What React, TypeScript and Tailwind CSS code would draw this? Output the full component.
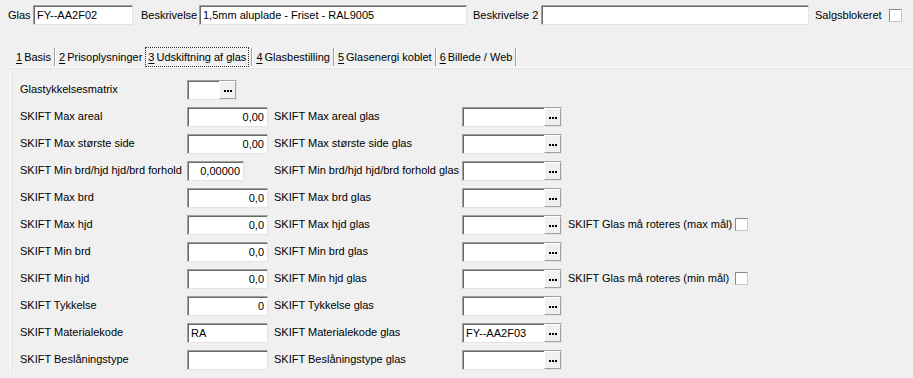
import React from 'react'

const font = { fontFamily: '"Liberation Sans", Arial, sans-serif' }

function Dots() {
  return (
    <span className="flex h-full w-[17px] shrink-0 items-center justify-center gap-[1px] border border-t-white border-l-white border-b-[#a0a0a0] border-r-[#a0a0a0] bg-[#f0f0f0] pt-[2px]">
      <i className="block h-[2px] w-[2px] bg-black" />
      <i className="block h-[2px] w-[2px] bg-black" />
      <i className="block h-[2px] w-[2px] bg-black" />
    </span>
  )
}

function Field({ w, value = '', right = false, button = false }: { w: string; value?: string; right?: boolean; button?: boolean }) {
  return (
    <div className={`flex h-[20px] ${w} items-stretch border border-t-[#a0a0a0] border-l-[#a0a0a0] border-b-[#e3e3e3] border-r-[#e3e3e3] bg-white shadow-[inset_1px_1px_0_#696969]`}>
      <span className={`flex flex-1 items-center overflow-hidden whitespace-nowrap px-[3px] pt-px leading-none ${right ? 'justify-end' : ''}`}>
        {value}
      </span>
      {button && <Dots />}
    </div>
  )
}

function Check() {
  return <span className="block h-[13px] w-[13px] shrink-0 border border-t-[#8a8a8a] border-l-[#8a8a8a] border-b-[#c8c8c8] border-r-[#c8c8c8] bg-white" />
}

const rows: { l1: string; v1?: string; n?: boolean; narrow?: boolean; l2?: string; v2?: string; l3?: string; dots1?: boolean }[] = [
  { l1: 'Glastykkelsesmatrix', dots1: true },
  { l1: 'SKIFT Max areal', v1: '0,00', n: true, l2: 'SKIFT Max areal glas' },
  { l1: 'SKIFT Max største side', v1: '0,00', n: true, l2: 'SKIFT Max største side glas' },
  { l1: 'SKIFT Min brd/hjd hjd/brd forhold', v1: '0,00000', n: true, narrow: true, l2: 'SKIFT Min brd/hjd hjd/brd forhold glas' },
  { l1: 'SKIFT Max brd', v1: '0,0', n: true, l2: 'SKIFT Max brd glas' },
  { l1: 'SKIFT Max hjd', v1: '0,0', n: true, l2: 'SKIFT Max hjd glas', l3: 'SKIFT Glas må roteres (max mål)' },
  { l1: 'SKIFT Min brd', v1: '0,0', n: true, l2: 'SKIFT Min brd glas' },
  { l1: 'SKIFT Min hjd', v1: '0,0', n: true, l2: 'SKIFT Min hjd glas', l3: 'SKIFT Glas må roteres (min mål)' },
  { l1: 'SKIFT Tykkelse', v1: '0', n: true, l2: 'SKIFT Tykkelse glas' },
  { l1: 'SKIFT Materialekode', v1: 'RA', l2: 'SKIFT Materialekode glas', v2: 'FY--AA2F03' },
  { l1: 'SKIFT Beslåningstype', v1: '', l2: 'SKIFT Beslåningstype glas' },
]

const tabs = ['Basis', 'Prisoplysninger', 'Udskiftning af glas', 'Glasbestilling', 'Glasenergi koblet', 'Billede / Web']

export default function App() {
  return (
    <div className="h-[378px] w-[913px] overflow-hidden bg-[#f0f0f0] text-[11px] text-black" style={font}>
      {/* Header fields */}
      <div className="flex h-[30px] items-center whitespace-nowrap pl-[8px]">
        <span className="w-[25px]">Glas</span>
        <Field w="w-[100px]" value="FY--AA2F02" />
        <span className="w-[66px] pl-[8px]">Beskrivelse</span>
        <Field w="w-[268px]" value="1,5mm aluplade - Friset - RAL9005" />
        <span className="w-[74px] pl-[6px]">Beskrivelse 2</span>
        <Field w="w-[268px]" />
        <span className="w-[80px] pl-[6px]">Salgsblokeret</span>
        <Check />
      </div>

      {/* Tabs */}
      <div className="mt-[17px] flex h-[20px] items-stretch whitespace-nowrap pl-[15px]">
        {tabs.map((t, i) => (
          <div key={t} className="flex items-stretch">
            <span className={`flex items-center ${i === 2 ? 'border border-dotted border-[#333] px-[2px]' : 'px-px'}`}>
              <span className="underline underline-offset-[2px]">{i + 1}</span>
              <span className="ml-[2px]">{t}</span>
            </span>
            {i !== 1 && <span className="mx-[2px] my-[1px] w-[2px] border-l border-l-[#a0a0a0] border-r border-r-white" />}
            {i === 1 && <span className="w-[2px]" />}
          </div>
        ))}
      </div>

      {/* Panel */}
      <div className="ml-[10px] border-l border-t border-l-white border-t-white bg-[#f0f0f0] pl-[9px] pt-[8px] shadow-[inset_1px_1px_0_#e3e3e3]">
        {rows.map((r) => (
          <div key={r.l1} className="flex h-[27px] items-center whitespace-nowrap">
            <span className="w-[167px]">{r.l1}</span>
            <div className="w-[87px]">
              {r.dots1 ? (
                <Field w="w-[50px]" button />
              ) : (
                <Field w={r.narrow ? 'w-[57px]' : 'w-[81px]'} value={r.v1} right={r.n} />
              )}
            </div>
            {r.l2 && (
              <>
                <span className="w-[188px]">{r.l2}</span>
                <div className="w-[106px]">
                  <Field w="w-[100px]" value={r.v2} button />
                </div>
              </>
            )}
            {r.l3 && (
              <>
                <span className="w-[167px]">{r.l3}</span>
                <Check />
              </>
            )}
          </div>
        ))}
      </div>
    </div>
  )
}
